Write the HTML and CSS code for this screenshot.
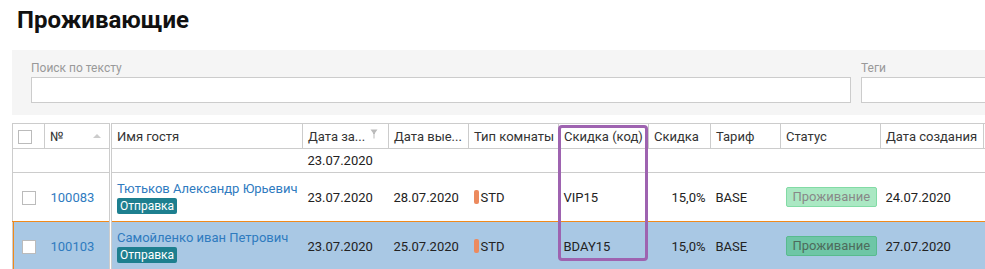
FILE: index.html
```html
<!DOCTYPE html>
<html>
<head>
  <meta charset="UTF-8" />
  <title>Проживающие</title>
  <link rel="stylesheet" href="styles.css">
</head>
<body>
  <h1 class="title">Проживающие</h1>

  <div class="filters">
    <div class="field field-text">
      <label>Поиск по тексту</label>
      <input type="text" />
    </div>
    <div class="field field-tags">
      <label>Теги</label>
      <input type="text" />
    </div>
  </div>

  <div class="grid-wrap">
    <table class="grid">
      <colgroup>
        <col class="c-cb"><col class="c-num"><col class="c-name"><col class="c-date"><col class="c-date2">
        <col class="c-room"><col class="c-code"><col class="c-disc"><col class="c-rate"><col class="c-status">
        <col class="c-created"><col class="c-more">
      </colgroup>
      <thead>
        <tr>
          <th class="cb-cell"><span class="cb"></span></th>
          <th class="num-col">№ <span class="sort"></span></th>
          <th>Имя гостя</th>
          <th>Дата за... <svg class="pin" width="8" height="10" viewBox="0 0 8 10"><path d="M0.5 0.5h7l-2.5 3.5v1h-2v-1z" fill="#bbb"/><rect x="3.5" y="5" width="1" height="4.5" fill="#bbb"/></svg></th>
          <th>Дата вые...</th>
          <th>Тип комнаты</th>
          <th>Скидка (код)</th>
          <th>Скидка</th>
          <th>Тариф</th>
          <th>Статус</th>
          <th>Дата создания</th>
          <th></th>
        </tr>
      </thead>
      <tbody>
        <tr class="filter-row">
          <td></td>
          <td class="num-col"></td>
          <td></td>
          <td>23.07.2020</td>
          <td></td><td></td><td></td><td></td><td></td><td></td><td></td><td></td>
        </tr>
        <tr class="row">
          <td class="cb-cell"><span class="cb"></span></td>
          <td class="num-col"><a class="link" href="#">100083</a></td>
          <td><a class="link" href="#">Тютьков Александр Юрьевич</a><br><span class="tag">Отправка</span></td>
          <td>23.07.2020</td>
          <td>28.07.2020</td>
          <td><span class="room-mark"></span>STD</td>
          <td>VIP15</td>
          <td class="right">15,0%</td>
          <td>BASE</td>
          <td><span class="status">Проживание</span></td>
          <td>24.07.2020</td>
          <td></td>
        </tr>
        <tr class="row selected">
          <td class="cb-cell"><span class="cb"></span></td>
          <td class="num-col"><a class="link" href="#">100103</a></td>
          <td><a class="link" href="#">Самойленко иван Петрович</a><br><span class="tag">Отправка</span></td>
          <td>23.07.2020</td>
          <td>25.07.2020</td>
          <td><span class="room-mark"></span>STD</td>
          <td>BDAY15</td>
          <td class="right">15,0%</td>
          <td>BASE</td>
          <td><span class="status">Проживание</span></td>
          <td>27.07.2020</td>
          <td></td>
        </tr>
      </tbody>
    </table>
    <div class="highlight"></div>
  </div>
</body>
</html>
```

FILE: styles.css
```css
body {
  margin: 0;
  font-family: Roboto, "Noto Sans", sans-serif;
  font-size: 13px;
  color: #222;
  background: #fff;
  overflow: hidden;
}

.title {
  margin: 0;
  padding: 6px 0 0 17px;
  height: 44px;
  box-sizing: border-box;
  font-size: 24px;
  font-weight: bold;
  color: #111;
}

.filters {
  margin: 6px 0 0 12px;
  height: 65px;
  background: #f5f5f5;
  display: flex;
  gap: 10px;
  padding: 11px 0 0 19px;
  box-sizing: border-box;
  white-space: nowrap;
}
.field label {
  display: block;
  font-size: 12px;
  color: #999;
  height: 16px;
}
.field input {
  display: block;
  box-sizing: border-box;
  height: 26px;
  border: 1px solid #ccc;
  background: #fff;
  margin: 0;
}
.field-text input { width: 820px; }
.field-tags input { width: 200px; }

.grid-wrap {
  position: relative;
  margin: 8px 0 0 12px;
}
.grid {
  border-collapse: collapse;
  table-layout: fixed;
  width: 1040px;
  border-left: 1px solid #ccc;
}
.c-cb { width: 32px; }
.c-num { width: 66px; }
.c-name { width: 192px; }
.c-date { width: 86px; }
.c-date2 { width: 80px; }
.c-room { width: 90px; }
.c-code { width: 90px; }
.c-disc { width: 62px; }
.c-rate { width: 70px; }
.c-status { width: 100px; }
.c-created { width: 103px; }
.c-more { width: 69px; }

.grid th {
  height: 24px;
  padding: 0 5px;
  text-align: left;
  font-weight: normal;
  color: #333;
  border-top: 1px solid #ccc;
  border-bottom: 1px solid #ccc;
  border-right: 1px solid #ccc;
  white-space: nowrap;
  overflow: hidden;
}
.grid td {
  padding: 0 5px;
  white-space: nowrap;
  overflow: hidden;
}
.grid th.num-col, .grid td.num-col {
  border-right: 3px double #ccc;
  position: relative;
}
.filter-row td {
  height: 23px;
  border-bottom: 1px solid #ccc;
}
.row td { height: 48px; }
.row.selected td {
  background: #a9c8e4;
  border-top: 1px solid #f08a1c;
}
.grid .row.selected td.num-col { border-right: 3px double #ccc; }
.grid tr.selected td:first-child { box-shadow: inset 1px 0 0 #f08a1c; }

.cb-cell { text-align: center; }
.cb {
  display: inline-block;
  width: 12px;
  height: 12px;
  border: 1px solid #bbb;
  background: #fff;
  vertical-align: middle;
}
.sort {
  position: absolute;
  right: 8px;
  top: 10px;
  width: 0;
  height: 0;
  border-left: 4px solid transparent;
  border-right: 4px solid transparent;
  border-bottom: 4px solid #ccc;
}
.pin { margin-left: 2px; vertical-align: 2px; }

.link { color: #2f7bbf; text-decoration: none; }
.row td.num-col .link { padding-left: 1px; }
.tag {
  display: inline-block;
  margin-top: 2px;
  padding: 0 3px;
  line-height: 16px;
  font-size: 12px;
  color: #fff;
  background: #1d7f8f;
  border-radius: 2px;
}
.room-mark {
  display: inline-block;
  width: 5px;
  height: 14px;
  margin-right: 2px;
  background: #ec8a5e;
  border-radius: 2px;
  vertical-align: -2px;
}
.right { text-align: right; }
.status {
  display: inline-block;
  padding: 0 6px;
  line-height: 18px;
  color: #888;
  background: #aae8c3;
  border: 1px solid #82dba5;
  border-radius: 2px;
}
.selected .status {
  color: #4d6b5c;
  background: #6ec6a6;
  border-color: #58bb8e;
}

.highlight {
  position: absolute;
  left: 546px;
  top: 2px;
  width: 84px;
  height: 130px;
  border: 3px solid #9e63b0;
  border-radius: 4px;
}
```
